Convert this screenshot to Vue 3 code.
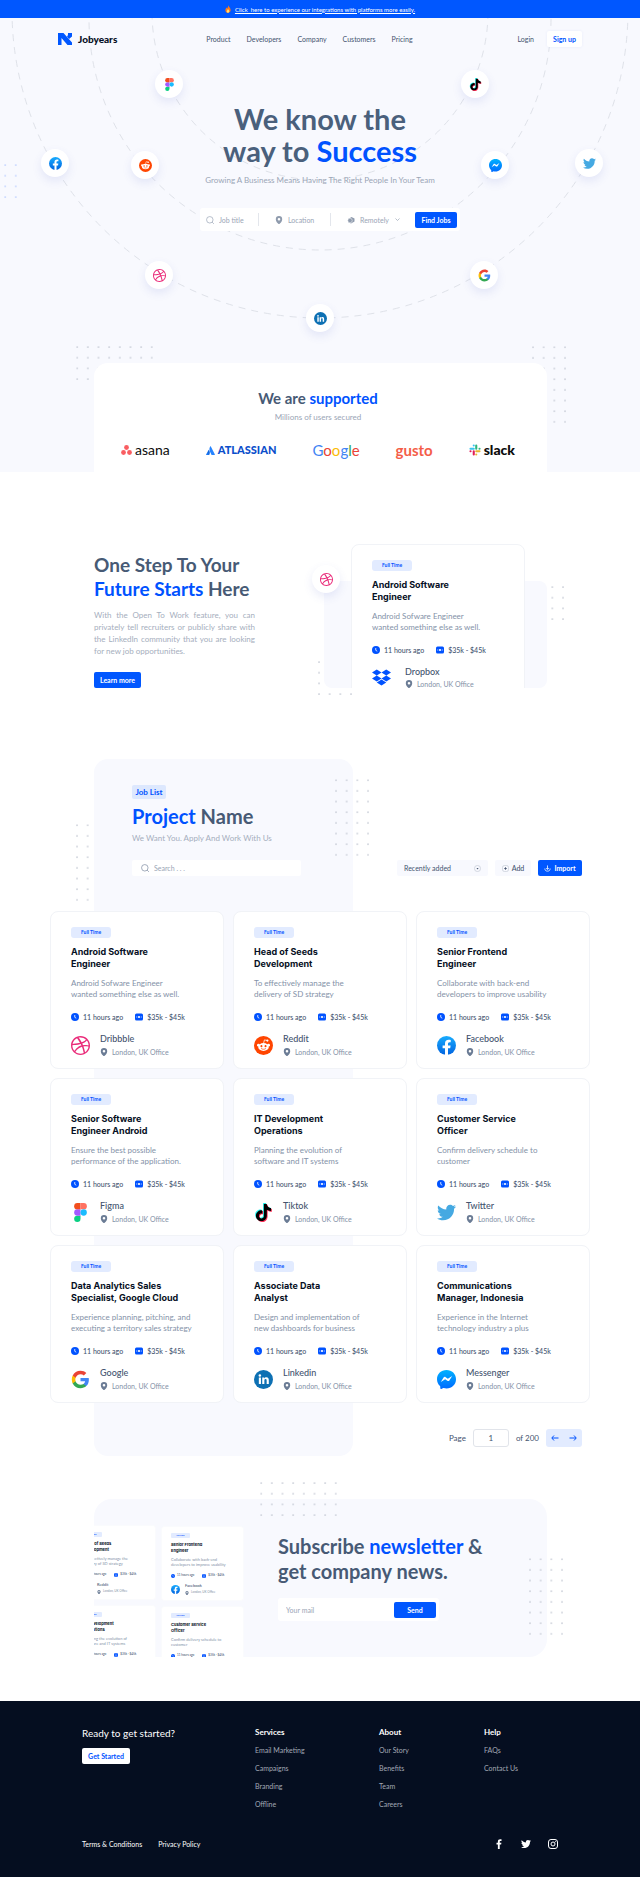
<script setup>
import { ref } from 'vue'

const nav = ['Product', 'Developers', 'Company', 'Customers', 'Pricing']

const bubbles = [
  { icon: 'figma', spot: 'spot-figma' },
  { icon: 'tiktok', spot: 'spot-tiktok' },
  { icon: 'facebook', spot: 'spot-facebook' },
  { icon: 'reddit', spot: 'spot-reddit' },
  { icon: 'messenger', spot: 'spot-messenger' },
  { icon: 'twitter', spot: 'spot-twitter' },
  { icon: 'dribbble', spot: 'spot-dribbble' },
  { icon: 'google', spot: 'spot-google' },
  { icon: 'linkedin', spot: 'spot-linkedin' }
]

const featured = {
  title: ['Android Software', 'Engineer'],
  text: ['Android Sofware Engineer', 'wanted something else as well.'],
  company: 'Dropbox',
  icon: 'dropbox'
}

const jobs = [
  { title: ['Android Software', 'Engineer'], text: ['Android Sofware Engineer', 'wanted something else as well.'], company: 'Dribbble', icon: 'dribbble' },
  { title: ['Head of Seeds', 'Development'], text: ['To effectively manage the', 'delivery of SD strategy'], company: 'Reddit', icon: 'reddit' },
  { title: ['Senior Frontend', 'Engineer'], text: ['Collaborate with back-end', 'developers to improve usability'], company: 'Facebook', icon: 'facebook' },
  { title: ['Senior Software', 'Engineer Android'], text: ['Ensure the best possible', 'performance of the application.'], company: 'Figma', icon: 'figma' },
  { title: ['IT Development', 'Operations'], text: ['Planning the evolution of', 'software and IT systems'], company: 'Tiktok', icon: 'tiktok' },
  { title: ['Customer Service', 'Officer'], text: ['Confirm delivery schedule to', 'customer'], company: 'Twitter', icon: 'twitter' },
  { title: ['Data Analytics Sales', 'Specialist, Google Cloud'], text: ['Experience planning, pitching, and', 'executing a territory sales strategy'], company: 'Google', icon: 'google' },
  { title: ['Associate Data', 'Analyst'], text: ['Design and implementation of', 'new dashboards for business'], company: 'Linkedin', icon: 'linkedin' },
  { title: ['Communications', 'Manager, Indonesia'], text: ['Experience in the Internet', 'technology industry a plus'], company: 'Messenger', icon: 'messenger' }
]

const miniColumns = [
  [jobs[1], jobs[4]],
  [jobs[2], jobs[5]]
]

const footerColumns = [
  { title: 'Services', links: ['Email Marketing', 'Campaigns', 'Branding', 'Offline'] },
  { title: 'About', links: ['Our Story', 'Benefits', 'Team', 'Careers'] },
  { title: 'Help', links: ['FAQs', 'Contact Us'] }
]

const page = ref('1')
</script>

<template>
  <div class="page">
    <svg class="defs" width="0" height="0" aria-hidden="true">
      <defs>
        <linearGradient id="g-blue" x1="0" y1="0" x2="0" y2="1">
          <stop offset="0" stop-color="#18acfe" />
          <stop offset="1" stop-color="#0163e0" />
        </linearGradient>
        <linearGradient id="g-msg" x1="0" y1="0" x2="0" y2="1">
          <stop offset="0" stop-color="#00b2ff" />
          <stop offset="1" stop-color="#006aff" />
        </linearGradient>
        <linearGradient id="g-atl" x1="1" y1="0" x2="0" y2="1">
          <stop offset="0" stop-color="#0052cc" />
          <stop offset="1" stop-color="#2684ff" />
        </linearGradient>
        <pattern id="dots" width="32" height="32" patternUnits="userSpaceOnUse">
          <circle cx="3" cy="3" r="2.6" fill="#c3c8d3" />
        </pattern>
        <pattern id="dots-blue" width="32" height="32" patternUnits="userSpaceOnUse">
          <circle cx="3" cy="3" r="2.6" fill="#b7cbff" />
        </pattern>
      </defs>
      <symbol id="i-figma" viewBox="0 0 24 24">
        <path d="M8 24a4 4 0 0 0 4-4v-4H8a4 4 0 0 0 0 8z" fill="#0acf83" />
        <path d="M4 12a4 4 0 0 1 4-4h4v8H8a4 4 0 0 1-4-4z" fill="#a259ff" />
        <path d="M4 4a4 4 0 0 1 4-4h4v8H8a4 4 0 0 1-4-4z" fill="#f24e1e" />
        <path d="M12 0h4a4 4 0 0 1 0 8h-4z" fill="#ff7262" />
        <circle cx="16" cy="12" r="4" fill="#1abcfe" />
      </symbol>
      <symbol id="i-note" viewBox="0 0 24 24">
        <path d="M12.525.02c1.31-.02 2.61-.01 3.91-.02.08 1.53.63 3.09 1.75 4.17 1.12 1.11 2.7 1.62 4.24 1.79v4.03c-1.44-.05-2.89-.35-4.2-.97-.57-.26-1.1-.59-1.62-.93-.01 2.92.01 5.84-.02 8.75-.08 1.4-.54 2.79-1.35 3.94-1.31 1.92-3.58 3.17-5.91 3.21-1.43.08-2.86-.31-4.08-1.03-2.02-1.19-3.44-3.37-3.65-5.71-.02-.5-.03-1-.01-1.49.18-1.9 1.12-3.72 2.58-4.96 1.66-1.44 3.98-2.13 6.15-1.72.02 1.48-.04 2.96-.04 4.44-.99-.32-2.15-.23-3.02.37-.63.41-1.11 1.04-1.36 1.75-.21.51-.15 1.07-.14 1.61.24 1.64 1.82 3.02 3.5 2.87 1.12-.01 2.19-.66 2.77-1.61.19-.33.4-.67.41-1.06.1-1.79.06-3.57.07-5.36.01-4.03-.01-8.05.02-12.07z" />
      </symbol>
      <symbol id="i-tiktok" viewBox="0 0 24 24">
        <use href="#i-note" x="0" y="0" width="22" height="22" fill="#25f4ee" />
        <use href="#i-note" x="2" y="2" width="22" height="22" fill="#fe2c55" />
        <use href="#i-note" x="1" y="1" width="22" height="22" fill="#000" />
      </symbol>
      <symbol id="i-facebook" viewBox="0 0 24 24">
        <circle cx="12" cy="12" r="12" fill="url(#g-blue)" />
        <path fill="#fff" d="M16.67 15.47 17.2 12h-3.33V9.75c0-.95.47-1.87 1.96-1.87h1.51V4.92s-1.37-.23-2.69-.23c-2.74 0-4.53 1.66-4.53 4.67V12H7.08v3.47h3.05v8.38a12 12 0 0 0 3.75 0v-8.38z" />
      </symbol>
      <symbol id="i-reddit" viewBox="0 0 24 24">
        <circle cx="12" cy="12" r="12" fill="#ff4500" />
        <path d="M12.2 8.8 13.2 4.9l3.2.7" fill="none" stroke="#fff" stroke-width="1" />
        <circle cx="16.9" cy="5.8" r="1.4" fill="#fff" />
        <circle cx="5.6" cy="11.6" r="1.8" fill="#fff" />
        <circle cx="18.4" cy="11.6" r="1.8" fill="#fff" />
        <ellipse cx="12" cy="13.8" rx="6.7" ry="5" fill="#fff" />
        <circle cx="9.4" cy="12.8" r="1.3" fill="#ff4500" />
        <circle cx="14.6" cy="12.8" r="1.3" fill="#ff4500" />
        <path d="M9.4 16c1.4 1.1 3.8 1.1 5.2 0" fill="none" stroke="#ff4500" stroke-width=".9" stroke-linecap="round" />
      </symbol>
      <symbol id="i-messenger" viewBox="0 0 24 24">
        <path fill="url(#g-msg)" d="M12 0C5.24 0 0 4.95 0 11.64c0 3.5 1.43 6.52 3.77 8.61.2.18.32.42.32.68l.07 2.14c.02.68.72 1.12 1.34.85l2.39-1.05c.2-.1.42-.1.64-.05 1.1.3 2.26.46 3.47.46 6.76 0 12-4.95 12-11.64S18.76 0 12 0z" />
        <path fill="#fff" d="M4.8 15.1 8.3 9.5c.6-.9 1.7-1.1 2.6-.5l2.8 2.1 5.5-3.6-3.6 5.7c-.5.9-1.7 1.1-2.5.5l-2.8-2.1z" />
      </symbol>
      <symbol id="i-twitter" viewBox="0 0 24 24">
        <path d="M23.954 4.569c-.885.389-1.83.654-2.825.775 1.014-.611 1.794-1.574 2.163-2.723-.951.555-2.005.959-3.127 1.184-.896-.959-2.173-1.559-3.591-1.559-2.717 0-4.92 2.203-4.92 4.917 0 .39.045.765.127 1.124C7.691 8.094 4.066 6.13 1.64 3.161c-.427.722-.666 1.561-.666 2.475 0 1.71.87 3.213 2.188 4.096-.807-.026-1.566-.248-2.228-.616v.061c0 2.385 1.693 4.374 3.946 4.827-.413.111-.849.171-1.296.171-.314 0-.615-.03-.916-.086.631 1.953 2.445 3.377 4.604 3.417-1.68 1.319-3.809 2.105-6.102 2.105-.39 0-.779-.023-1.17-.067 2.189 1.394 4.768 2.209 7.557 2.209 9.054 0 13.999-7.496 13.999-13.986 0-.209 0-.42-.015-.63.961-.689 1.8-1.56 2.46-2.548l-.047-.02z" />
      </symbol>
      <symbol id="i-dribbble" viewBox="0 0 24 24">
        <path fill="#ea2c7a" d="M12 24C5.385 24 0 18.615 0 12S5.385 0 12 0s12 5.385 12 12-5.385 12-12 12zm10.12-10.358c-.35-.11-3.17-.953-6.384-.438 1.34 3.684 1.887 6.684 1.992 7.308 2.3-1.555 3.936-4.02 4.395-6.87zm-6.115 7.808c-.153-.9-.75-4.032-2.19-7.77l-.066.02c-5.79 2.015-7.86 6.025-8.04 6.4 1.73 1.358 3.92 2.166 6.29 2.166 1.42 0 2.77-.29 4-.814zm-11.62-2.58c.232-.4 3.045-5.055 8.332-6.765.135-.045.27-.084.405-.12-.26-.585-.54-1.167-.832-1.74C7.17 11.775 2.206 11.71 1.756 11.7l-.004.312c0 2.633.998 5.037 2.634 6.855zm-2.42-8.955c.46.008 4.683.026 9.477-1.248-1.698-3.018-3.53-5.558-3.8-5.928-2.868 1.35-5.01 3.99-5.676 7.17zM9.6 2.052c.282.38 2.145 2.914 3.822 6 3.645-1.365 5.19-3.44 5.373-3.702-1.81-1.61-4.19-2.586-6.795-2.586-.825 0-1.63.1-2.4.285zm10.335 3.483c-.218.29-1.935 2.493-5.724 4.04.24.49.47.985.68 1.486.08.18.15.36.22.53 3.41-.43 6.8.26 7.14.33-.02-2.42-.88-4.64-2.31-6.38z" />
      </symbol>
      <symbol id="i-google" viewBox="0 0 24 24">
        <path fill="#4285f4" d="M22.56 12.25c0-.78-.07-1.53-.2-2.25H12v4.26h5.92c-.26 1.37-1.04 2.53-2.21 3.31v2.77h3.57c2.08-1.92 3.28-4.74 3.28-8.09z" />
        <path fill="#34a853" d="M12 23c2.97 0 5.46-.98 7.28-2.66l-3.57-2.77c-.98.66-2.23 1.06-3.71 1.06-2.86 0-5.29-1.93-6.16-4.53H2.18v2.84C3.99 20.53 7.7 23 12 23z" />
        <path fill="#fbbc05" d="M5.84 14.09c-.22-.66-.35-1.36-.35-2.09s.13-1.43.35-2.09V7.07H2.18C1.43 8.55 1 10.22 1 12s.43 3.45 1.18 4.93l3.66-2.84z" />
        <path fill="#ea4335" d="M12 5.38c1.62 0 3.06.56 4.21 1.64l3.15-3.15C17.45 2.09 14.97 1 12 1 7.7 1 3.99 3.47 2.18 7.07l3.66 2.84c.87-2.6 3.3-4.53 6.16-4.53z" />
      </symbol>
      <symbol id="i-linkedin" viewBox="0 0 24 24">
        <circle cx="12" cy="12" r="12" fill="#0d70b3" />
        <circle cx="7.4" cy="7" r="1.6" fill="#fff" />
        <path fill="#fff" d="M6.1 9.6h2.7v8.2H6.1zM10.4 9.6H13v1.1c.5-.8 1.4-1.4 2.6-1.4 2.6 0 3.1 1.7 3.1 3.9v4.6H16v-4.1c0-1 0-2.2-1.4-2.2s-1.5 1-1.5 2.1v4.2h-2.7z" />
      </symbol>
      <symbol id="i-dropbox" viewBox="0 0 24 24">
        <path fill="#0052ff" d="M6 1.807 0 5.629l6 3.822 6.001-3.822zM18 1.807l-6 3.822 6 3.822 6-3.822zM0 13.274l6 3.822 6.001-3.822L6 9.452zM18 9.452l-6 3.822 6 3.822 6-3.822zM6 18.371l6.001 3.822 6-3.822-6-3.822z" />
      </symbol>
      <symbol id="i-clock" viewBox="0 0 16 16">
        <circle cx="8" cy="8" r="8" fill="#0052ff" />
        <path d="M7.5 4v4.6l3 1.8" fill="none" stroke="#fff" stroke-width="1.6" />
      </symbol>
      <symbol id="i-money" viewBox="0 0 16 16">
        <rect y="1" width="16" height="14" rx="3" fill="#0052ff" />
        <circle cx="8" cy="8" r="2.2" fill="#fff" />
        <path d="M2.5 8h2M11.5 8h2" stroke="#fff" stroke-width="1.6" />
      </symbol>
      <symbol id="i-pin" viewBox="0 0 16 16">
        <path fill-rule="evenodd" d="M8 0a6.4 6.4 0 0 0-6.4 6.5C1.6 11 6 16 8 16s6.4-5 6.4-9.5A6.4 6.4 0 0 0 8 0zm0 4a2.6 2.6 0 1 1 0 5.2A2.6 2.6 0 0 1 8 4z" />
      </symbol>
      <symbol id="i-search" viewBox="0 0 16 16">
        <circle cx="7.6" cy="7.6" r="6.5" fill="none" stroke="currentColor" stroke-width="1.4" />
        <path d="m13 13 2 2" stroke="currentColor" stroke-width="1.6" stroke-linecap="round" />
      </symbol>
    </svg>

    <div class="banner">
      <span class="flame"><svg viewBox="0 0 16 20" aria-hidden="true"><path fill="#ff7a1a" d="M8.5 0c.6 3.5 6.5 6.5 6.5 12.5C15 17 12 20 8 20s-7-3-7-7c0-3 2-5 3-7 .8 1 1 2 1.5 3C7 6.5 8.5 4 8.5 0z" /><path fill="#ffe27a" d="M8 9c.5 2.5 3.5 4 3.5 7 0 2.4-1.5 4-3.5 4s-3.5-1.6-3.5-4c0-2.5 3-4 3.5-7z" /></svg></span>
      <a href="#integrations">Click&nbsp; here to experience our integrations with platforms more easily.</a>
    </div>

    <section class="hero">
      <svg class="orbits" viewBox="0 0 640 454" aria-hidden="true">
        <g fill="none" stroke="#dfe2e9" stroke-width="1" stroke-dasharray="7 6">
          <circle cx="320" cy="-6" r="168" />
          <circle cx="320" cy="1" r="231" />
          <circle cx="320" cy="-8" r="308" />
        </g>
      </svg>
      <svg class="dots dots-edge" viewBox="0 0 38 102"><rect width="38" height="102" fill="url(#dots-blue)" /></svg>
      <svg class="dots wide dots-hero-left" viewBox="0 0 230 102"><rect width="230" height="102" fill="url(#dots)" /></svg>
      <svg class="dots tall dots-hero-right" viewBox="0 0 102 230"><rect width="102" height="230" fill="url(#dots)" /></svg>
      <span v-for="b in bubbles" :key="b.icon" class="bubble" :class="b.spot">
        <svg :class="b.icon"><use :href="`#i-${b.icon}`" /></svg>
      </span>

      <header class="topbar">
        <a class="brand" href="#home">
          <svg viewBox="0 0 28 24" aria-hidden="true">
            <path fill="#0057ff" d="M0 0h11l17 19v5h-9L7 10v14H0z" />
            <path fill="#0057ff" d="M18 7c2-2 2-4 2-7h8v7l-6 5z" />
          </svg>
          Jobyears
        </a>
        <nav class="nav">
          <a v-for="n in nav" :key="n" :href="`#${n.toLowerCase()}`">{{ n }}</a>
        </nav>
        <div class="account">
          <a href="#login">Login</a>
          <button type="button" class="signup">Sign up</button>
        </div>
      </header>

      <h1>We know the<br />way to <em>Success</em></h1>
      <p class="lead">Growing A Business Means Having The Right People In Your Team</p>

      <form class="finder" @submit.prevent>
        <label class="field f-title"><svg><use href="#i-search" /></svg><input type="text" placeholder="Job title" aria-label="Job title" /></label>
        <label class="field f-place"><svg class="pin"><use href="#i-pin" /></svg><input type="text" placeholder="Location" aria-label="Location" /></label>
        <label class="field f-mode">
          <svg viewBox="0 0 16 16"><path d="M2 6.5 9 2l6 3v6l-7 4-6-3z" /><circle cx="6" cy="9" r="4.5" stroke="#fff" /></svg>
          <select aria-label="Work mode"><option>Remotely</option><option>On site</option></select>
          <svg class="chevron" viewBox="0 0 10 6"><path d="m1 1 4 4 4-4" fill="none" stroke="#9aa5b6" stroke-width="1.4" /></svg>
        </label>
        <button type="submit" class="btn">Find Jobs</button>
      </form>

      <div class="supported">
        <h2>We are <em>supported</em></h2>
        <p>Millions of users secured</p>
        <div class="logos">
          <span class="logo asana">
            <svg viewBox="0 0 22 20"><g fill="#f95d61"><circle cx="11" cy="5" r="4.8" /><circle cx="5" cy="15" r="4.8" /><circle cx="17" cy="15" r="4.8" /></g></svg>asana
          </span>
          <span class="logo atlassian">
            <svg viewBox="0 0 20 20"><path fill="url(#g-atl)" d="M6 8.5c1.5 2 4 6 1.2 11.5H1c-.8 0-1.2-.6-.8-1.3z" /><path fill="#2684ff" d="M9.8.5C6 6 7.8 10.5 9 13l3.4 7h6.5c.8 0 1.2-.6.9-1.3L10.5.5c-.2-.3-.5-.3-.7 0z" /></svg>ATLASSIAN
          </span>
          <span class="logo google-word"><b class="c-blue">G</b><b class="c-red">o</b><b class="c-yellow">o</b><b class="c-blue">g</b><b class="c-green">l</b><b class="c-red">e</b></span>
          <span class="logo gusto">gusto</span>
          <span class="logo slack">
            <svg viewBox="0 0 24 24" fill="none" stroke-width="4.2" stroke-linecap="round"><path stroke="#36c5f0" d="M9.5 9.5H3M9.5 3v.1" /><path stroke="#2eb67d" d="M14.5 3v6.5M21 9.5h.1" /><path stroke="#ecb22e" d="M14.5 14.5H21M14.5 21v.1" /><path stroke="#e01e5a" d="M9.5 14.5V21M3 14.5h.1" /></svg>slack
          </span>
        </div>
      </div>
    </section>

    <section class="feature">
      <div class="pitch">
        <h2>One Step To Your<br /><em>Future Starts</em> Here</h2>
        <p>With the Open To Work feature, you can privately tell recruiters or publicly share with the LinkedIn community that you are looking for new job opportunities.</p>
        <button type="button" class="btn">Learn more</button>
      </div>
      <div class="showcase">
        <svg class="dots dots-show-right" viewBox="0 0 102 102"><rect width="102" height="102" fill="url(#dots)" /></svg>
        <svg class="dots dots-show-left" viewBox="0 0 102 102"><rect width="102" height="102" fill="url(#dots)" /></svg>
        <div class="slab"></div>
        <div class="clip">
          <article class="card">
            <span class="tag">Full Time</span>
            <h3>{{ featured.title[0] }}<br />{{ featured.title[1] }}</h3>
            <p>{{ featured.text[0] }}<br />{{ featured.text[1] }}</p>
            <div class="meta">
              <span><svg><use href="#i-clock" /></svg>11 hours ago</span>
              <span><svg><use href="#i-money" /></svg>$35k - $45k</span>
            </div>
            <div class="firm">
              <svg class="mark"><use :href="`#i-${featured.icon}`" /></svg>
              <div><strong>{{ featured.company }}</strong><span class="place"><svg><use href="#i-pin" /></svg>London, UK Office</span></div>
            </div>
          </article>
        </div>
        <span class="bubble spot-show"><svg class="dribbble"><use href="#i-dribbble" /></svg></span>
      </div>
    </section>

    <section class="jobs">
      <svg class="dots tall dots-jobs-left" viewBox="0 0 102 230"><rect width="102" height="230" fill="url(#dots)" /></svg>
      <div class="backdrop"></div>
      <svg class="dots tall dots-jobs-right" viewBox="0 0 102 230"><rect width="102" height="230" fill="url(#dots)" /></svg>
      <div class="intro">
        <span class="chip">Job List</span>
        <h2><em>Project</em> Name</h2>
        <p>We Want You. Apply And Work With Us</p>
        <div class="toolbar">
          <label class="search"><svg><use href="#i-search" /></svg><input type="search" placeholder="Search . . ." aria-label="Search jobs" /></label>
          <label class="sort">
            <select aria-label="Sort order"><option>Recently added</option><option>Oldest</option></select>
            <svg viewBox="0 0 16 16"><circle cx="8" cy="8" r="7" fill="none" stroke="#b4bcc9" stroke-width="1.2" /><path d="M5.5 7h5L8 10z" fill="#4a5a74" /></svg>
          </label>
          <button type="button" class="add"><svg viewBox="0 0 16 16"><rect x="1" y="1" width="14" height="14" rx="5" fill="none" stroke="#b4bcc9" stroke-width="1.2" /><path d="M8 5v6M5 8h6" stroke="#3c4c66" stroke-width="1.8" /></svg>Add</button>
          <button type="button" class="btn import"><svg viewBox="0 0 16 16" fill="none" stroke="#fff" stroke-width="1.8"><path d="M8 1v9M5 7l3 3 3-3M2 8c0 4 2 6 6 6s6-2 6-6" /></svg>Import</button>
        </div>
      </div>
      <div class="grid">
        <article v-for="j in jobs" :key="j.company" class="card">
          <span class="tag">Full Time</span>
          <h3>{{ j.title[0] }}<br />{{ j.title[1] }}</h3>
          <p>{{ j.text[0] }}<br />{{ j.text[1] }}</p>
          <div class="meta">
            <span><svg><use href="#i-clock" /></svg>11 hours ago</span>
            <span><svg><use href="#i-money" /></svg>$35k - $45k</span>
          </div>
          <div class="firm">
            <svg class="mark" :class="j.icon"><use :href="`#i-${j.icon}`" /></svg>
            <div><strong>{{ j.company }}</strong><span class="place"><svg><use href="#i-pin" /></svg>London, UK Office</span></div>
          </div>
        </article>
      </div>
      <div class="pager">
        <label for="page-number">Page</label>
        <input id="page-number" v-model="page" type="text" />
        <span>of 200</span>
        <div class="arrows">
          <button type="button" aria-label="Previous page"><svg viewBox="0 0 16 12"><path d="M15 6H2M6 1 1.5 6 6 11" /></svg></button>
          <button type="button" aria-label="Next page"><svg viewBox="0 0 16 12"><path d="M1 6h13M10 1l4.5 5L10 11" /></svg></button>
        </div>
      </div>
    </section>

    <section class="newsletter">
      <svg class="dots wide dots-news-top" viewBox="0 0 230 102"><rect width="230" height="102" fill="url(#dots)" /></svg>
      <svg class="dots tall dots-news-right" viewBox="0 0 102 230"><rect width="102" height="230" fill="url(#dots)" /></svg>
      <div class="minis">
        <div v-for="(col, i) in miniColumns" :key="i" class="mini-col">
          <article v-for="j in col" :key="j.company" class="card mini">
            <span class="tag">Full Time</span>
            <h3>{{ j.title[0] }}<br />{{ j.title[1] }}</h3>
            <p>{{ j.text[0] }}<br />{{ j.text[1] }}</p>
            <div class="meta">
              <span><svg><use href="#i-clock" /></svg>11 hours ago</span>
              <span><svg><use href="#i-money" /></svg>$35k - $45k</span>
            </div>
            <div class="firm">
              <svg class="mark" :class="j.icon"><use :href="`#i-${j.icon}`" /></svg>
              <div><strong>{{ j.company }}</strong><span class="place"><svg><use href="#i-pin" /></svg>London, UK Office</span></div>
            </div>
          </article>
        </div>
      </div>
      <div class="subscribe">
        <h2>Subscribe <em>newsletter</em> &amp;<br />get company news.</h2>
        <form class="mail" @submit.prevent>
          <input type="email" placeholder="Your mail" aria-label="Your mail" />
          <button type="submit" class="btn">Send</button>
        </form>
      </div>
    </section>

    <footer class="footer">
      <div class="foot-top">
        <div class="start">
          <p>Ready to get started?</p>
          <button type="button">Get Started</button>
        </div>
        <nav v-for="c in footerColumns" :key="c.title" class="foot-col" :aria-label="c.title">
          <h4>{{ c.title }}</h4>
          <a v-for="l in c.links" :key="l" href="#">{{ l }}</a>
        </nav>
      </div>
      <div class="foot-bottom">
        <a href="#terms">Terms &amp; Conditions</a>
        <a href="#privacy">Privacy Policy</a>
        <div class="social">
          <a href="#facebook" aria-label="Facebook"><svg viewBox="0 0 10 18"><path fill="#fff" d="M3 18v-8H.5V6.8H3V4.6C3 1.7 4.6.3 7 .3c1.2 0 2 .1 2.5.2v2.9H7.9c-1.3 0-1.6.7-1.6 1.6v1.8h3L8.9 10H6.3v8z" /></svg></a>
          <a href="#twitter" aria-label="Twitter"><svg fill="#fff"><use href="#i-twitter" /></svg></a>
          <a href="#instagram" aria-label="Instagram"><svg viewBox="0 0 20 20" fill="none" stroke="#fff" stroke-width="2"><rect x="1" y="1" width="18" height="18" rx="5" /><circle cx="10" cy="10" r="4" /><circle cx="15" cy="5" r=".5" /></svg></a>
        </div>
      </div>
    </footer>
  </div>
</template>

<style>
body {
  background: #fff;
}
</style>

<style scoped>
.page {
  font-family: Lato, 'Open Sans', sans-serif;
  font-size: 8px;
  color: #44546f;
  overflow: hidden;
}
.defs { position: absolute; }
h1, h2, h3, h4, p { margin: 0; }
em { font-style: normal; color: #0052ff; }
a { color: inherit; text-decoration: none; }
svg { display: block; flex: none; }
button, input, select { font: inherit; color: inherit; border: 0; padding: 0; margin: 0; background: none; appearance: none; outline: none; min-width: 0; }
button { cursor: pointer; }
input::placeholder { color: #9aa5b6; opacity: 1; }
h2 { font-size: 19px; line-height: 24px; font-weight: 700; color: #475a75; }

.btn {
  height: 16px;
  border-radius: 2px;
  background: #0057ff;
  color: #fff;
  font-size: 7px;
  font-weight: 700;
}

.dots { position: absolute; z-index: -1; }
.wide { width: 77px; height: 34px; }
.tall { width: 34px; height: 77px; }

.banner {
  height: 18px;
  background: #0057ff;
  color: #fff;
  font-size: 6px;
  display: flex;
  align-items: center;
  justify-content: center;
  gap: 4px;
}
.banner a { text-decoration: underline; }
.flame svg { width: 6px; height: 8px; }

.hero {
  position: relative;
  z-index: 0;
  background: #f8f9fe;
  overflow: hidden;
}
.orbits { position: absolute; z-index: -1; top: 0; left: 50%; width: 640px; margin-left: -320px; }
.dots-edge { left: 4px; top: 146px; width: 13px; height: 34px; }
.dots-hero-left { left: 76px; top: 328px; }
.dots-hero-right { right: 74px; top: 328px; }

.bubble {
  position: absolute;
  width: 28px;
  height: 28px;
  border-radius: 50%;
  background: #fff;
  box-shadow: 0 4px 10px rgba(70, 90, 200, 0.12);
  display: flex;
  align-items: center;
  justify-content: center;
}
.bubble svg { width: 13px; height: 13px; }
.twitter { fill: #45a9e2; }
.spot-figma { left: 155px; top: 52px; }
.spot-tiktok { right: 151px; top: 52px; }
.spot-facebook { left: 41px; top: 131px; }
.spot-reddit { left: 131px; top: 133px; }
.spot-messenger { right: 131px; top: 133px; }
.spot-twitter { right: 37px; top: 131px; }
.spot-dribbble { left: 145px; top: 243px; }
.spot-google { right: 142px; top: 243px; }
.spot-linkedin { left: 50%; margin-left: -14px; top: 286px; }

.topbar {
  display: flex;
  align-items: center;
  height: 16px;
  padding: 13px 58px 0;
  font-size: 7px;
}
.brand {
  display: flex;
  align-items: center;
  gap: 6px;
  font-size: 10px;
  font-weight: 900;
  color: #060f24;
  margin-right: 89px;
}
.brand svg { width: 14px; height: 12px; }
.nav { display: flex; gap: 16px; }
.account { display: flex; align-items: center; gap: 13px; margin-left: auto; }
.signup {
  width: 35px;
  height: 16px;
  border-radius: 2px;
  background: #fff;
  color: #0052ff;
  font-weight: 700;
  box-shadow: 0 0 3px rgba(70, 90, 200, 0.08);
}

h1 {
  margin-top: 56px;
  text-align: center;
  font-size: 29px;
  line-height: 32px;
  font-weight: 700;
  color: #4a607c;
}
.lead {
  margin-top: 7px;
  text-align: center;
  font-size: 8px;
  line-height: 12px;
  color: #9aa5b6;
}

.finder {
  display: flex;
  align-items: center;
  width: 260px;
  height: 23px;
  margin: 22px 0 0 calc(50% - 120px);
  padding-right: 3px;
  box-sizing: border-box;
  background: #fff;
  border-radius: 3px;
  font-size: 7px;
  color: #9aa5b6;
}
.field { display: flex; align-items: center; gap: 5px; height: 13px; }
.field + .field { border-left: 1px solid #e3e6ec; }
.field svg { width: 8px; height: 8px; fill: #8f9bad; }
.field input { width: 100%; }
.f-title { flex: 52; padding-left: 6px; }
.f-place { flex: 55; padding-left: 16px; }
.f-mode { flex: 68; padding-left: 16px; }
.f-mode select { width: 30px; }
.field .chevron { width: 5px; height: 3px; }
.finder .btn { width: 42px; }

.supported {
  margin: 132px 93px 0 94px;
  padding: 26px 32px 14px 27px;
  background: #fff;
  border-radius: 14px 14px 0 0;
  text-align: center;
}
.supported h2 { font-size: 15px; line-height: 18px; }
.supported p { margin-top: 5px; line-height: 10px; color: #9aa5b6; }
.logos {
  display: flex;
  justify-content: space-between;
  align-items: center;
  height: 16px;
  margin-top: 20px;
}
.logo { display: flex; align-items: center; gap: 3px; line-height: 16px; color: #0b0b0b; }
.asana { font-size: 14px; }
.asana svg { width: 11px; height: 10px; }
.atlassian { font-size: 11px; font-weight: 900; color: #0c4fcb; }
.atlassian svg { width: 9px; height: 9px; }
.google-word { font-size: 15px; gap: 0; }
.google-word b { font-weight: 400; }
.c-blue { color: #4285f4; }
.c-red { color: #ea4335; }
.c-yellow { color: #fbbc05; }
.c-green { color: #34a853; }
.gusto { font-size: 15px; font-weight: 700; color: #f45d48; }
.slack { font-size: 14px; font-weight: 900; }
.slack svg { width: 12px; height: 12px; }

.feature {
  position: relative;
  z-index: 0;
  display: flex;
  justify-content: space-between;
  padding: 72px 93px 0 94px;
}
.pitch { width: 161px; padding-top: 9px; }
.pitch h2 { white-space: nowrap; }
.pitch p { margin-top: 8px; font-size: 8px; line-height: 12px; color: #a5aebd; text-align: justify; }
.pitch .btn { width: 47px; margin-top: 15px; }
.showcase { position: relative; width: 223px; }
.slab { position: absolute; z-index: -1; inset: 37px 0 0; background: #f8f9fe; border-radius: 8px; }
.clip { height: 144px; margin: 0 22px 0 27px; overflow: hidden; }
.spot-show { left: -12px; top: 21px; }
.dots-show-right { width: 34px; height: 34px; right: -17px; top: 42px; }
.dots-show-left { width: 34px; height: 34px; left: -6px; top: 117px; }

.card {
  box-sizing: border-box;
  height: 158px;
  padding: 15px 0 0 20px;
  background: #fff;
  border: 1px solid #f1f3f7;
  border-radius: 8px;
}
.tag {
  display: block;
  width: 40px;
  height: 11px;
  border-radius: 3px;
  background: #e2ebff;
  color: #0052ff;
  font-size: 5px;
  line-height: 11px;
  font-weight: 700;
  text-align: center;
}
.card h3 { margin-top: 8px; font-family: Inter, sans-serif; font-size: 9px; line-height: 12px; font-weight: 700; color: #060f24; white-space: nowrap; }
.card p { margin-top: 8px; font-size: 8px; line-height: 11px; color: #8492a8; white-space: nowrap; }
.meta { display: flex; gap: 12px; margin-top: 12px; font-size: 7px; line-height: 10px; font-weight: 500; }
.meta span { display: flex; align-items: center; gap: 4px; white-space: nowrap; }
.meta svg { width: 8px; height: 8px; }
.firm { display: flex; align-items: center; gap: 10px; margin-top: 12px; }
.mark { width: 19px; height: 19px; }
.firm strong { display: block; font-size: 9px; line-height: 10px; font-weight: 500; }
.place { display: flex; align-items: center; gap: 4px; margin-top: 3px; font-size: 7px; line-height: 10px; color: #8492a8; white-space: nowrap; }
.place svg { width: 8px; height: 8px; fill: #6b7c95; }
.showcase .firm { gap: 14px; }
.showcase .place { line-height: 8px; }

.jobs {
  position: relative;
  z-index: 0;
  margin-top: 71px;
  padding: 26px 50px 9px;
}
.backdrop { position: absolute; z-index: -1; top: 0; bottom: 0; left: 94px; width: 259px; background: #f8f9fe; border-radius: 14px; }
.dots-jobs-left { left: 76px; top: 65px; z-index: -2; }
.dots-jobs-right { left: 335px; top: 20px; }
.intro { padding: 0 8px 0 82px; }
.chip {
  display: block;
  width: 34px;
  height: 14px;
  border-radius: 2px;
  background: #dde8fe;
  color: #0052ff;
  line-height: 14px;
  font-size: 8px;
  font-weight: 700;
  text-align: center;
}
.intro h2 { margin-top: 5px; font-size: 20px; }
.intro p { margin-top: 5px; line-height: 10px; color: #a5aebd; }
.toolbar { display: flex; gap: 7px; height: 16px; margin-top: 17px; font-size: 7px; }
.search {
  display: flex;
  align-items: center;
  gap: 5px;
  width: 169px;
  padding-left: 9px;
  margin-right: auto;
  box-sizing: border-box;
  background: #fff;
  border-radius: 2px;
  color: #7d8ba1;
}
.search svg { width: 8px; height: 8px; }
.sort { display: flex; align-items: center; justify-content: space-between; width: 91px; padding: 0 7px; box-sizing: border-box; background: #f8f9fe; border-radius: 2px; }
.sort svg { width: 7px; height: 7px; }
.add { display: flex; align-items: center; justify-content: center; gap: 3px; width: 36px; background: #f8f9fe; border-radius: 2px; font-weight: 500; }
.add svg, .import svg { width: 7px; height: 7px; }
.import { display: flex; align-items: center; justify-content: center; gap: 3px; width: 44px; }

.grid { display: grid; grid-template-columns: repeat(3, 1fr); gap: 9px; margin-top: 35px; }

.pager { display: flex; align-items: center; justify-content: flex-end; gap: 7px; height: 18px; margin-top: 26px; padding-right: 8px; }
.pager input { width: 36px; height: 18px; box-sizing: border-box; border: 1px solid #e1e4ea; border-radius: 3px; text-align: center; background: #fff; }
.arrows { display: flex; height: 18px; background: #e2ebff; border-radius: 3px; }
.arrows button { width: 18px; display: flex; align-items: center; justify-content: center; }
.arrows svg { width: 8px; height: 6px; fill: none; stroke: #0052ff; stroke-width: 2; }

.newsletter {
  position: relative;
  display: flex;
  align-items: flex-end;
  height: 158px;
  margin: 43px 93px 44px 94px;
  background: #f8f9fe;
  border-radius: 18px;
}
.newsletter .dots { z-index: 0; }
.dots-news-top { left: 166px; top: -17px; }
.dots-news-right { right: -16px; top: 59px; }
.minis { display: flex; justify-content: flex-end; gap: 5px; width: 150px; height: 132px; overflow: hidden; }
.mini-col { display: flex; flex: none; flex-direction: column; gap: 5px; width: 83px; }
.mini-col + .mini-col { padding-top: 1px; }

.mini { height: 75px; flex: none; padding: 6px 0 0 9px; border-color: #fafbfd; border-radius: 3px; }
.mini .tag { width: 19px; height: 5px; border-radius: 1px; font-size: 2px; line-height: 5px; }
.mini h3 { margin-top: 4px; font-size: 4px; line-height: 6px; }
.mini p { margin-top: 3px; font-size: 4px; line-height: 5px; }
.mini .meta { gap: 8px; margin-top: 6px; font-size: 3px; line-height: 5px; }
.mini .meta span, .mini .place { gap: 2px; }
.mini .meta svg { width: 4px; height: 4px; }
.mini .firm { gap: 5px; margin-top: 5px; }
.mini .mark { width: 9px; height: 9px; }
.mini strong { font-size: 4px; line-height: 5px; }
.mini .place { margin-top: 2px; font-size: 3px; line-height: 5px; }
.mini .place svg { width: 4px; height: 4px; }

.subscribe { padding: 0 0 36px 34px; }
.subscribe h2 { font-size: 20px; line-height: 25px; white-space: nowrap; }
.mail { display: flex; align-items: center; width: 161px; height: 23px; margin-top: 14px; padding: 0 3px 0 8px; box-sizing: border-box; background: #fff; border-radius: 3px; font-size: 7px; }
.mail input { flex: 1; }
.mail .btn { width: 42px; }

.footer { background: #050e20; color: #fff; padding: 25px 82px 27px; }
.foot-top { display: grid; grid-template-columns: 173px 124px 105px 1fr; min-height: 84px; }
.start p { font-size: 10px; line-height: 14px; }
.start button { width: 48px; height: 16px; margin-top: 8px; background: #fff; border-radius: 2px; color: #0052ff; font-size: 7px; font-weight: 700; }
.foot-col { display: flex; flex-direction: column; gap: 6px; font-size: 7px; line-height: 12px; color: #a3a9b5; }
.foot-col h4 { font-size: 8px; font-weight: 700; color: #fff; }
.foot-bottom { display: flex; align-items: center; gap: 16px; margin-top: 28px; font-size: 7px; line-height: 12px; }
.social { display: flex; align-items: center; gap: 17px; margin-left: auto; }
.social svg { width: 10px; height: 10px; }
</style>
